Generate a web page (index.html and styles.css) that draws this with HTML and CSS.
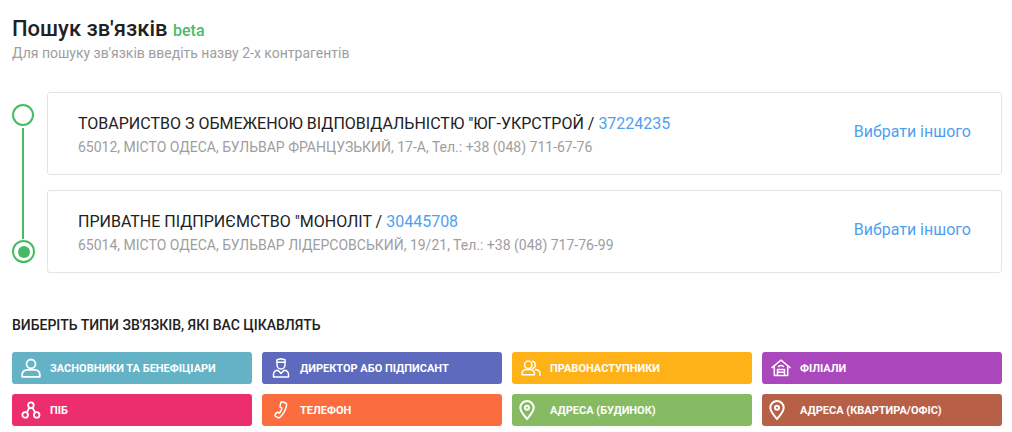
FILE: index.html
```html
<!DOCTYPE html>
<html lang="uk">
<head>
<meta charset="utf-8">
<title>Пошук зв'язків</title>
<link rel="stylesheet" href="styles.css">
</head>
<body>
<main class="page">
  <header class="head">
    <h1 class="title">Пошук зв'язків <span class="beta">beta</span></h1>
    <p class="subtitle">Для пошуку зв'язків введіть назву 2-х контрагентів</p>
  </header>

  <section class="picked">
    <div class="stepper">
      <span class="dot"></span>
      <span class="line"></span>
      <span class="dot dot-on"></span>
    </div>
    <div class="cards">
      <article class="card">
        <div class="card-body">
          <div class="card-name">ТОВАРИСТВО З ОБМЕЖЕНОЮ ВІДПОВІДАЛЬНІСТЮ "<span class="nokern">ЮГ-УКРСТРОЙ</span> / <a class="code">37224235</a></div>
          <div class="card-addr">65012, МІСТО ОДЕСА, БУЛЬВАР ФРАНЦУЗЬКИЙ, 17-А, Тел.: +38 (048) 711-67-76</div>
        </div>
        <a class="change">Вибрати іншого</a>
      </article>
      <article class="card">
        <div class="card-body">
          <div class="card-name">ПРИВАТНЕ ПІДПРИЄМСТВО "МОНОЛІТ / <a class="code">30445708</a></div>
          <div class="card-addr">65014, МІСТО ОДЕСА, БУЛЬВАР ЛІДЕРСОВСЬКИЙ, 19/21, Тел.: +38 (048) 717-76-99</div>
        </div>
        <a class="change">Вибрати іншого</a>
      </article>
    </div>
  </section>

  <h2 class="types-title">ВИБЕРІТЬ ТИПИ ЗВ'ЯЗКІВ, ЯКІ ВАС ЦІКАВЛЯТЬ</h2>

  <section class="types">
    <button class="type c-teal">
      <svg class="ico ico-bold" viewBox="0 0 20 20"><circle cx="10" cy="6" r="4.500"/><path d="M1.200 18.900v-2.300c0-2.700 2.200-4.800 4.900-4.800h7.800c2.700 0 4.900 2.100 4.900 4.800v2.300z"/></svg>
      <span>ЗАСНОВНИКИ ТА БЕНЕФІЦІАРИ</span>
    </button>
    <button class="type c-indigo">
      <svg class="ico" viewBox="0 0 20 20"><path d="M5.800 4.300 6 1.800 10 .8l4 1 .2 2.500z"/><path d="M6 4.500v2.300c0 2.400 1.800 4.300 4 4.300s4-1.900 4-4.300V4.500"/><path d="M2.500 19v-2.500c0-2.500 2-4.300 4.500-4.300l3 3.300 3-3.300c2.500 0 4.500 1.800 4.500 4.300V19z"/></svg>
      <span>ДИРЕКТОР АБО ПІДПИСАНТ</span>
    </button>
    <button class="type c-amber">
      <svg class="ico" viewBox="0 0 20 20"><circle cx="7.200" cy="6.800" r="3.700"/><path d="M1 16.800v-1.200c0-2.400 2-4.100 4.300-4.100h3.800c2.400 0 4.300 1.700 4.300 4.100v1.200z"/><path d="M11.500 3.200a3.700 3.700 0 0 1 0 7.200M14.500 11.500c2.700.3 4.500 2 4.500 4.200v1.800"/></svg>
      <span>ПРАВОНАСТУПНИКИ</span>
    </button>
    <button class="type c-purple">
      <svg class="ico" viewBox="0 0 20 20"><path d="M1 9.600 10 2.200l9 7.400"/><path d="M3.300 8.200v9.300h13.400V8.200"/><path d="M6.500 17.300v-5.800h7v5.800M6.500 14.300h7"/><path d="M7.500 8.500a3.400 3.400 0 0 1 5 0"/></svg>
      <span>ФІЛІАЛИ</span>
    </button>
    <button class="type c-pink">
      <svg class="ico ico-bold" viewBox="0 0 20 20"><circle cx="9.900" cy="5.200" r="2.800"/><circle cx="4.200" cy="14.900" r="2.800"/><circle cx="15.700" cy="14.900" r="2.800"/><path d="M8.400 7.600 5.700 12.500M11.400 7.600l2.800 4.900"/></svg>
      <span>ПІБ</span>
    </button>
    <button class="type c-orange">
      <svg class="ico" viewBox="0 0 20 20"><path d="M11.800 2 15 3.200c.6.300.8.800.7 1.400-.8 4.700-3.500 9.800-7 12.900-.5.400-1 .5-1.600.2L4.500 16.300c-.7-.4-.8-1.200-.3-1.800l1.400-1.800c.4-.5 1-.6 1.600-.3l1.300.8c1.200-1.500 2-3.200 2.400-5l-1.300-.8c-.5-.3-.7-.9-.5-1.500l.7-3.300c.2-.6.900-.9 1.500-.6z"/></svg>
      <span>ТЕЛЕФОН</span>
    </button>
    <button class="type c-green">
      <svg class="ico ico-pin" viewBox="0 0 20 20"><path d="M10 19C6.500 14.800 3.300 11.500 3.300 7.700a6.700 6.700 0 0 1 13.400 0c0 3.800-3.200 7.100-6.700 11.300z"/><circle cx="10" cy="7.700" r="2"/></svg>
      <span>АДРЕСА (БУДИНОК)</span>
    </button>
    <button class="type c-brown">
      <svg class="ico ico-pin" viewBox="0 0 20 20"><path d="M10 19C6.500 14.800 3.300 11.500 3.300 7.700a6.700 6.700 0 0 1 13.400 0c0 3.800-3.200 7.100-6.700 11.300z"/><circle cx="10" cy="7.700" r="2"/></svg>
      <span>АДРЕСА (КВАРТИРА/ОФІС)</span>
    </button>
  </section>
</main>
</body>
</html>
```
FILE: styles.css
```css
* { box-sizing: border-box; }
html, body { margin: 0; padding: 0; background: #fff; }
body { font-family: Roboto, "Liberation Sans", sans-serif; color: #212121; }

.page { width: 1012px; height: 432px; padding: 16px 10px 0 12px; overflow: hidden; }

.title { margin: 0; font-size: 22px; line-height: 26px; font-weight: 500; color: #212121; }
.beta { font-size: 16px; font-weight: 500; color: #4cbb6c; }
.subtitle { margin: -1px 0 0; font-size: 14px; line-height: 20px; color: #9e9e9e; }

.picked { display: flex; margin-top: 29px; }
.stepper { width: 35px; flex: none; display: flex; flex-direction: column; padding: 12px 0 10px; }
.dot { width: 22px; height: 22px; flex: none; border: 2px solid #47bb63; border-radius: 50%; background: #fff; position: relative; }
.dot-on { margin-top: 1px; height: 23px; width: 23px; }
.dot-on::after { content: ""; position: absolute; left: 3.500px; top: 3.500px; width: 12px; height: 12px; border-radius: 50%; background: #47bb63; }
.line { width: 2px; height: 111px; margin: 2px 0 0 10px; background: #47bb63; flex: none; }

.cards { flex: 1; display: flex; flex-direction: column; gap: 15px; }
.card { height: 83px; display: flex; align-items: center; justify-content: space-between; padding: 0 30px; border: 1px solid #e4e4e4; border-radius: 3px; background: #fff; }
.card-body { margin-top: 2px; }
.card-name { font-size: 16px; line-height: 22px; color: #212121; }
.nokern { font-kerning: none; }
.card-addr { font-size: 14px; line-height: 20px; margin-top: 2px; color: #9e9e9e; }
.code { color: #4f9ff0; }
.change { font-size: 16px; color: #4f9ff0; margin-bottom: 4px; }

.types-title { margin: 44px 0 0; font-size: 14px; line-height: 16px; font-weight: 500; color: #212121; }

.types { display: grid; grid-template-columns: repeat(4, 240px); gap: 10px; margin-top: 19px; }
.type { height: 32px; display: flex; align-items: center; gap: 9px; padding: 0 0 0 9px; border: 0; border-radius: 3px; font-family: inherit; font-size: 11px; font-weight: 700; color: #fff; text-align: left; }
.ico { width: 20px; height: 20px; flex: none; fill: none; stroke: #fff; stroke-width: 1.500; stroke-linejoin: round; stroke-linecap: round; }
.ico-bold { stroke-width: 1.800; }
.ico-pin { margin: 0 4px 0 -4px; stroke-width: 2; }

.c-teal { background: #63b2c6; }
.c-indigo { background: #5d6abe; }
.c-amber { background: #ffb218; }
.c-purple { background: #ab47bc; }
.c-pink { background: #ec2e6e; }
.c-orange { background: #fb6c3e; }
.c-green { background: #86bb64; }
.c-brown { background: #b85f47; }
```
